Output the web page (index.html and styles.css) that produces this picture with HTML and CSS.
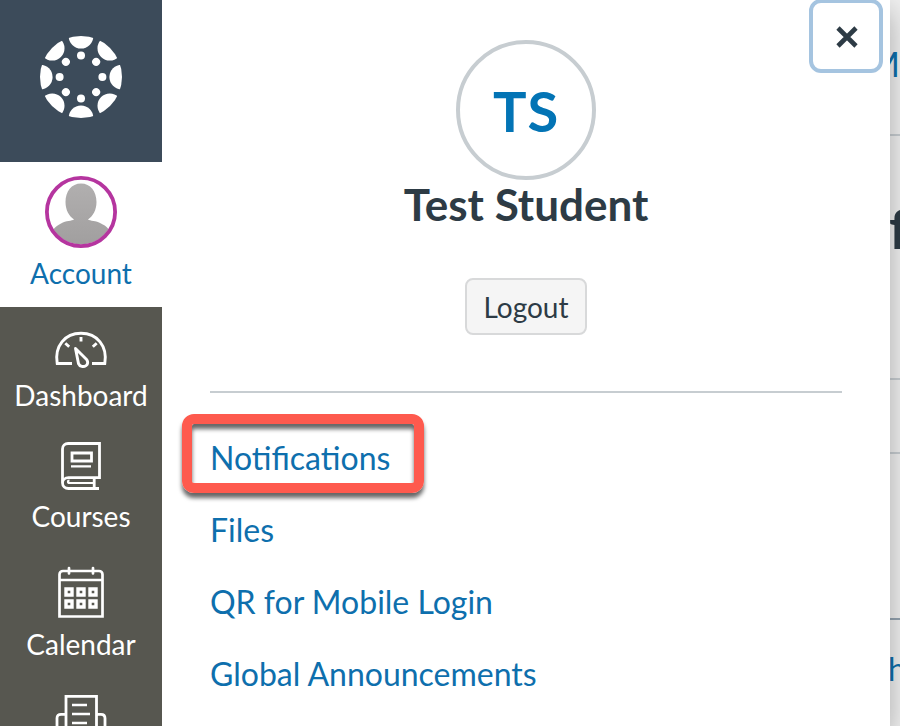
FILE: index.html
```html
<!DOCTYPE html>
<html lang="en">
<head>
<meta charset="utf-8">
<title>Account</title>
<link rel="stylesheet" href="styles.css">
</head>
<body>
<div class="app">
  <nav class="nav">
    <a class="logo">
      <svg width="82" height="82" viewBox="-41 -41 82 82">
        <defs>
          <clipPath id="disc"><circle r="41"/></clipPath>
          <g id="seg"><circle cy="-40.700" r="12.300"/><circle cy="-21.4" r="4"/></g>
        </defs>
        <g clip-path="url(#disc)" fill="#fff">
          <use href="#seg"/><use href="#seg" transform="rotate(45)"/><use href="#seg" transform="rotate(90)"/><use href="#seg" transform="rotate(135)"/><use href="#seg" transform="rotate(180)"/><use href="#seg" transform="rotate(225)"/><use href="#seg" transform="rotate(270)"/><use href="#seg" transform="rotate(315)"/>
        </g>
      </svg>
    </a>
    <a class="item account">
      <svg width="72" height="72" viewBox="0 0 72 72">
        <defs>
          <clipPath id="face"><circle cx="36" cy="36" r="32.5"/></clipPath>
          <linearGradient id="grey" x1="0" y1="0" x2="0" y2="1"><stop offset="0" stop-color="#b1afaf"/><stop offset="1" stop-color="#a09e9e"/></linearGradient>
        </defs>
        <circle cx="36" cy="36" r="34" fill="#fff"/>
        <path clip-path="url(#face)" fill="url(#grey)" d="M36 7.5c-9.500 0-15.500 8-15.500 18.500 0 8 3.500 14 8.500 17.500-2 1.500-8 1-13 4-5 2.500-8 5-8 9V72h56V56c0-4-3-6-8-8.500-5-3-11-2.500-13-4 5-3.500 8.500-9.500 8.500-17.500C51.500 15.500 45.500 7.500 36 7.500z"/>
        <circle cx="36" cy="36" r="34.100" fill="none" stroke="#b5359f" stroke-width="3.800"/>
      </svg>
      <span>Account</span>
    </a>
    <a class="item dashboard">
      <svg width="56" height="52" viewBox="0 0 56 52" fill="none" stroke="#fff" stroke-width="2.900">
        <path d="M19 39.500H4.200C1.200 22 12 9.300 28 9.300S54.800 22 51.800 39.500H39"/>
        <path d="M28 13v4.500M12.300 19.200l3.900 3.600M43.700 19.200l-3.900 3.600"/>
        <path stroke-linejoin="round" d="M22.500 24.500l11.300 11.200c1.200 2 1 4.500-.8 5.900-2.500 1.800-6.300 1-7.500-2z"/>
      </svg>
      <span>Dashboard</span>
    </a>
    <a class="item courses">
      <svg width="52" height="52" viewBox="0 0 52 52" fill="none" stroke="#fff" stroke-width="2.800">
        <path d="M44 48.500H13.500c-3.400 0-6-2.400-6-5.700V9c0-3.200 2.400-5.500 5.600-5.500H44.500v34.200H13.500c-3.400 0-6 2.200-6 5.300M39.200 38v10.500"/>
        <path d="M17 13H36.500v8H17z"/>
        <path stroke-width="2.200" d="M16 26.300H36M39 43H14.500c-2 0-2-2.500 0-2.500"/>
      </svg>
      <span>Courses</span>
    </a>
    <a class="item calendar">
      <svg width="52" height="52" viewBox="0 0 52 52" fill="none" stroke="#fff" stroke-width="2.700">
        <path d="M4.500 50.500V8.500c0-2 1.500-3.500 3.500-3.500H44c2 0 3.500 1.500 3.500 3.500v42zM4.500 14H47.500"/>
        <path stroke-linecap="round" d="M14 2v5.500M38 2v5.500"/>
        <path stroke-width="3.400" d="M11 23h6v6h-6zM23 23h6v6h-6zM35 23h6v6h-6zM11 35h6v6h-6zM23 35h6v6h-6zM35 35h6v6h-6z"/>
      </svg>
      <span>Calendar</span>
    </a>
    <a class="item inbox">
      <svg width="52" height="52" viewBox="0 0 52 52" fill="none" stroke="#fff" stroke-width="2.800">
        <path d="M11 40V2.300H41.500V40M11 20.300H6c-2.500 0-4 1.500-4 4V50H50V24.300c0-2.500-1.500-4-4-4h-4.500"/>
        <path stroke-width="2.400" d="M17 11H32M17 20H35M17 29H32"/>
      </svg>
    </a>
  </nav>

  <main class="tray">
    <button class="close" aria-label="Close">
      <svg width="22" height="22" viewBox="0 0 22 22"><path d="M2 2L20 20M20 2L2 20" stroke="#2d3b45" stroke-width="4.600"/></svg>
    </button>
    <div class="profile">
      <div class="avatar">TS</div>
      <h1>Test Student</h1>
      <button class="logout">Logout</button>
    </div>
    <hr>
    <ul class="links">
      <li><a class="marked">Notifications</a></li>
      <li><a>Files</a></li>
      <li><a>QR for Mobile Login</a></li>
      <li><a>Global Announcements</a></li>
    </ul>
  </main>

  <aside class="page">
    <div class="row crumb"><span>M</span></div>
    <div class="row title"><span>f</span></div>
    <div class="row band"></div>
    <div class="row body"></div>
    <div class="row foot"><span>h</span></div>
  </aside>
</div>
</body>
</html>
```

FILE: styles.css
```css
*, *::before { box-sizing: border-box; }

body {
  margin: 0;
  font-family: Lato, "Liberation Sans", sans-serif;
  color: #2d3b45;
  background: #fff;
  overflow: hidden;
}

.app { display: flex; height: 726px; overflow: hidden; }

.nav {
  position: relative;
  z-index: 2;
  width: 162px;
  flex: none;
  background: #575750;
  overflow: hidden;
}

.logo {
  display: flex;
  align-items: center;
  justify-content: center;
  height: 162px;
  padding: 0 1px 8px 0;
  background: #3c4b5a;
}

.item {
  display: flex;
  flex-direction: column;
  align-items: center;
  color: #fff;
  font-size: 28px;
  line-height: 34px;
}
.item svg { flex: none; }

.account { height: 145px; padding-top: 14px; background: #fff; color: #0e6fad; }
.account span { margin-top: 8px; }
.dashboard { height: 121px; padding-top: 17px; }
.dashboard span { margin-top: 2px; }
.courses { height: 126px; padding-top: 12px; }
.courses span { margin-top: 7px; }
.calendar { height: 126px; padding-top: 12px; }
.calendar span { margin-top: 9px; }
.inbox { padding-top: 14px; }

.tray {
  position: relative;
  z-index: 1;
  width: 728px;
  flex: none;
  padding: 40px 48px 0;
  background: #fff;
  box-shadow: 0 10px 28px rgba(0, 0, 0, .3);
}

.close {
  position: absolute;
  top: -1px;
  right: 7px;
  display: flex;
  align-items: center;
  justify-content: center;
  width: 74px;
  height: 74px;
  padding: 1px 0 0 1px;
  background: #fff;
  border: 4px solid #a5c4e0;
  border-radius: 12px;
}

.profile { display: flex; flex-direction: column; align-items: center; }

.avatar {
  display: flex;
  align-items: center;
  justify-content: center;
  width: 140px;
  height: 140px;
  padding-top: 1px;
  border: 4px solid #c7cdd1;
  border-radius: 50%;
  color: #0374b5;
  font-size: 56px;
  font-weight: 700;
  letter-spacing: 1px;
}

h1 {
  margin: -2px 0 0;
  font-size: 44px;
  line-height: 52px;
  font-weight: 700;
}

.logout {
  width: 122px;
  height: 57px;
  margin: 48px 0 0;
  padding: 0;
  background: #f5f5f5;
  border: 2px solid #d8d9da;
  border-radius: 8px;
  color: #2d3b45;
  font: 28px Lato, sans-serif;
}

hr {
  width: 632px;
  height: 2px;
  margin: 56px 0 0;
  border: 0;
  background: #c7cdd1;
}

.links { list-style: none; margin: 29px 0 0; padding: 0; }
.links li {
  position: relative;
  height: 72px;
  font-size: 32px;
  line-height: 72px;
  color: #0e6fad;
}

.marked::before {
  content: "";
  position: absolute;
  left: -28px;
  top: -8px;
  width: 242px;
  height: 79px;
  border: 10px solid #fe5a4e;
  border-radius: 12px;
  box-shadow: 0 5px 4px rgba(0, 0, 0, .6), inset 0 5px 4px rgba(0, 0, 0, .6);
}

.page { width: 10px; flex: none; background: #f0f0f0; overflow: hidden; }
.row {
  display: flex;
  justify-content: flex-end;
  align-items: flex-start;
  border-bottom: 2px solid #c7cdd1;
  overflow: hidden;
}
.crumb { height: 136px; padding: 42px 5px 0 0; color: #0e6fad; font-size: 35px; line-height: 42px; }
.crumb span { margin-right: -5px; }
.title { height: 244px; padding-top: 58px; font-size: 56px; line-height: 68px; font-weight: 700; }
.title span { margin-right: -9px; }
.band { height: 74px; }
.body { height: 166px; border-color: #94a3b0; }
.foot { justify-content: flex-start; border: 0; padding-top: 30px; color: #0e6fad; font-size: 32px; line-height: 38px; }
.foot span { margin-left: -2px; }
```
